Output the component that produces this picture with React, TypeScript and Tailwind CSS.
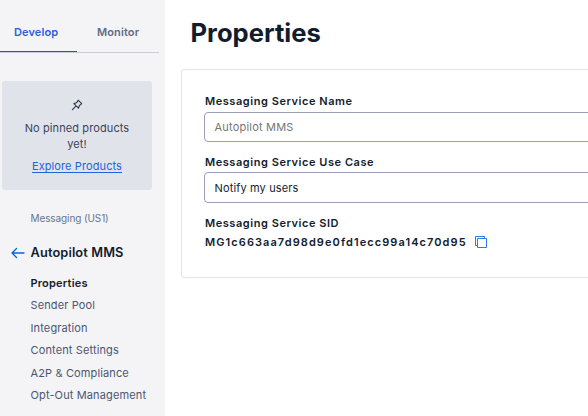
import React from "react";

const links = ["Sender Pool", "Integration", "Content Settings", "A2P & Compliance", "Opt-Out Management"];

function PinIcon() {
  return (
    <svg className="block h-[12px] w-[12px]" viewBox="0 0 12 12" fill="none" stroke="#303a50" strokeWidth="1.15" strokeLinejoin="round" strokeLinecap="round">
      <path d="M7.200 1.200 10.700 4.700 9.400 5.600 8.300 6.800 7.500 9.200 2.900 4.600 5.300 3.800 6.500 2.500ZM4.900 7.100 1.400 10.600" />
    </svg>
  );
}

function Sidebar() {
  return (
    <aside className="h-[416px] w-[165px] shrink-0 bg-[#f4f4f6] text-[11px]">
      <div className="flex h-[53px] w-[159px] border-b border-[#cacdd8] pt-[12px] font-semibold tracking-[0.12px]">
        <div className="h-[40px] w-[77px] border-b border-[#0263e0] pt-[12px] pl-[14px] leading-4 text-[#2b60d8]">Develop</div>
        <div className="pt-[12px] pl-[20px] leading-4 text-[#606b85]">Monitor</div>
      </div>
      <div className="mt-[28px] ml-[2px] flex h-[109px] w-[150px] flex-col items-center rounded-[3px] bg-[#e1e3ea] pt-[18px] text-center leading-4 tracking-[0.1px] text-[#39435a]">
        <PinIcon />
        <p className="mt-[9px] w-[110px]">No pinned products yet!</p>
        <a className="mt-[6px] text-[#2264dc] underline underline-offset-2">Explore Products</a>
      </div>
      <div className="mt-[20px] pl-[30.5px] text-[10px] leading-4 tracking-[-0.1px] text-[#69748c]">Messaging (US1)</div>
      <div className="mt-[17px] flex h-[20px] items-center pl-[11px] text-[12.8px] font-semibold tracking-[0.12px] text-[#121c2d]">
        <svg className="mr-[5.5px] h-[12px] w-[14px]" viewBox="0 0 14 12" fill="none" stroke="#0263e0" strokeWidth="1.3" strokeLinecap="round" strokeLinejoin="round">
          <path d="M13 6H1M5.500 1.500 1 6l4.500 4.500" />
        </svg>
        Autopilot MMS
      </div>
      <nav className="mt-[9px] flex flex-col pl-[30.5px] leading-[22.4px] tracking-[0.13px] text-[#4b5671]">
        <span className="font-semibold tracking-[0.2px] text-[#121c2d]">Properties</span>
        {links.map((l) => <span key={l}>{l}</span>)}
      </nav>
    </aside>
  );
}

export default function App() {
  return (
    <div className="flex h-[416px] w-[588px] overflow-hidden bg-white font-['Inter',sans-serif]">
      <Sidebar />
      <main className="min-w-0 flex-1 pl-[16px]">
        <h1 className="h-[69px] pt-[17px] pl-[9.5px] text-[25.6px] leading-[32px] font-bold text-[#121c2d]">Properties</h1>
        <section className="h-[209px] w-[440px] rounded-[3px] border border-[#e1e3ea] pt-[23px] pl-[22px] text-[11px] leading-4 text-[#121c2d]">
          <div className="pl-px font-semibold tracking-[0.55px]">Messaging Service Name</div>
          <div className="mt-[3px] flex h-[30px] items-center rounded-[4px] border border-[#999fb7] pl-[9.5px] tracking-[0.2px] text-[#757575]">Autopilot MMS</div>
          <div className="mt-[12px] pl-px font-semibold tracking-[0.55px]">Messaging Service Use Case</div>
          <div className="mt-[2px] flex h-[31px] items-center rounded-[4px] border border-[#999fb7] pl-[9.5px] tracking-[0.14px]">Notify my users</div>
          <div className="mt-[12px] pl-px font-semibold tracking-[0.55px]">Messaging Service SID</div>
          <div className="mt-[3px] flex items-center pl-px font-semibold tracking-[1.08px]">
            <span className="w-[262px]">MG1c663aa7d98d9e0fd1ecc99a14c70d95</span>
            <svg className="ml-[8px] h-[12px] w-[12px]" viewBox="0 0 12 12" fill="none" stroke="#2b7be5">
              <path d="M2 9.500H.5V.5h9V2M2.500 2.500h9v9h-9z" />
            </svg>
          </div>
        </section>
      </main>
    </div>
  );
}
